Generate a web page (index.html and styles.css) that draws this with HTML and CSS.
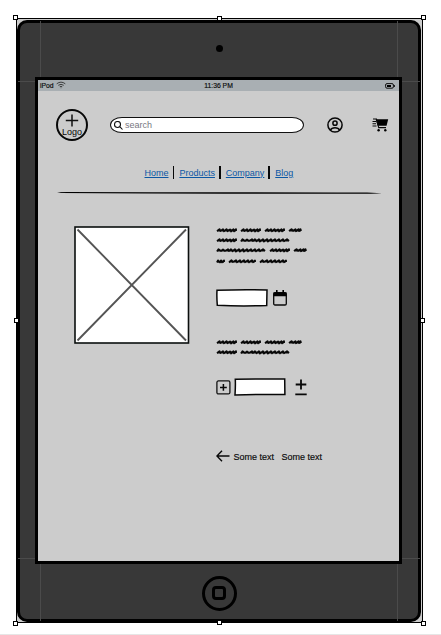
FILE: index.html
```html
<!DOCTYPE html>
<html lang="en">
<head>
<meta charset="utf-8">
<title>Product wireframe</title>
<link rel="stylesheet" href="styles.css">
</head>
<body>
<svg class="defs" aria-hidden="true">
  <symbol id="w5" viewBox="0 0 21 6"><path d="M1 4.2 3.500 2.200 4.500 4 7 2.300 8 4.200 10.500 2.200 11.500 4.200 14 2.400 15 4.400 17.500 2.300 18 4.300 20 2.200V4M1 3.600H20M10 3.300H19"/></symbol>
  <symbol id="w3" viewBox="0 0 14 6"><path d="M1 4 3.500 2.200 5 3.900 7.500 2.200 8 4.200 10.500 2.200 11 4.100 12.500 2.200 13 4M1 3.600H13"/></symbol>
  <symbol id="w12" viewBox="0 0 50 6"><path d="M1 4.600 2.500 2.300 5 4 7 2.500 9 4 12 2.300 13 4 15 2.300 16.500 4.300 19 2.300 20 4.500 23 2.300 24 4.500 27 2.200 28 4.500 31 2.300 32 4.300 35 2.200 36 4.200 39 2.300 40 4.300 43 2.200 44 4.200 47 2.200 49 4M1 3.600H49M14 3.400H34"/></symbol>
  <symbol id="w2" viewBox="0 0 9 6"><path d="M1 4.500 2 2.400 4 4.400 5 2.400 6 4.300 8 2.400V4M1 3.700H8"/></symbol>
  <symbol id="w7" viewBox="0 0 28 6"><path d="M1 4.400 3.500 2.300 5 4 8 2.300 9 4.200 12 2.300 13 4.300 16 2.200 17 4.200 20 2.300 21 4.300 24 2.200 25 4.200 27 2.500V4M1 3.600H27"/></symbol>
</svg>
<main class="artboard">
  <div class="tablet">
    <i class="guide left"></i><i class="guide right"></i><i class="guide top"></i><i class="guide bottom"></i>
    <div class="bezel"><span class="camera"></span></div>
    <section class="screen">
      <div class="status">
        <span class="carrier">iPod
          <svg width="10" height="8" viewBox="0 0 10 8"><path d="M.7 2.8Q5-.5 9.3 2.8M2.3 4.3Q5 2.3 7.7 4.3M3.8 5.7Q5 4.9 6.2 5.7M5 6.5v.7" fill="none" stroke="#222" stroke-width=".8"/></svg>
        </span>
        <span>11:36 PM</span>
        <svg class="battery" width="10" height="6" viewBox="0 0 10 6"><rect x=".6" y=".6" width="7.8" height="4.6" rx="1.4" fill="none" stroke="#111"/><path d="M2 2h4v2H2zM8.8 2h1v2h-1z"/></svg>
      </div>
      <header class="header">
        <div class="logo">
          <svg width="14" height="13" viewBox="0 0 14 13"><path d="M7 .5v12M.8 6.5h12.4" fill="none" stroke="#111" stroke-width="1.5"/></svg>
          <span>Logo</span>
        </div>
        <div class="search">
          <svg width="9" height="9" viewBox="0 0 9 9"><path d="M6 5.8 8.5 8.5M6.5 3.5a3 3 0 1 1-6 0 3 3 0 0 1 6 0Z" fill="none" stroke="#111" stroke-width="1.1"/></svg>
          <span>search</span>
        </div>
        <svg class="user" width="16" height="16" viewBox="0 0 16 16"><g fill="none" stroke="#080808" stroke-width="1.5"><circle cx="8" cy="8" r="7.1"/><circle cx="8" cy="6.2" r="2.1"/><path d="M3.4 13.1C4.2 11.5 6 10.8 8 10.8s3.8.7 4.6 2.3"/></g></svg>
        <svg class="cart" width="17" height="14" viewBox="0 0 17 14"><path d="M3.6 1.2H16.2L14.6 7.8H5.6z"/><path d="M1 1h3.5L6.7 9.6H14M.5 3.5H4M.5 5.8H4M.5 8H4.5" fill="none" stroke="#080808" stroke-width="1.1"/><circle cx="6.6" cy="12.3" r="1.2"/><circle cx="13.3" cy="12.3" r="1.2"/></svg>
      </header>
      <nav class="nav"><a>Home</a><a>Products</a><a>Company</a><a>Blog</a></nav>
      <svg class="rule" width="326" height="4" viewBox="0 0 326 4"><path d="M0 1.3 10 1Q120 1.2 310 1.6L325 2.3Q315 2.9 290 2.8Q100 2.7 4 2z"/></svg>
      <div class="product">
        <svg class="photo" width="116" height="118" viewBox="0 0 116 118"><rect x="1" y="1" width="113.5" height="116" fill="#fff" stroke="#0b0f0e" stroke-width="1.6"/><path d="M3.5 3.5 112 114.5M112 3.5 3.5 114.5" stroke="#555" stroke-width="1.9"/></svg>
        <div class="details">
          <div class="scribble">
            <p><svg class="w5"><use href="#w5"/></svg><svg class="w5"><use href="#w5"/></svg><svg class="w5"><use href="#w5"/></svg><svg class="w3"><use href="#w3"/></svg></p>
            <p><svg class="w5"><use href="#w5"/></svg><svg class="w12"><use href="#w12"/></svg></p>
            <p><svg class="w12"><use href="#w12"/></svg><svg class="w5"><use href="#w5"/></svg><svg class="w3"><use href="#w3"/></svg></p>
            <p><svg class="w2"><use href="#w2"/></svg><svg class="w7"><use href="#w7"/></svg><svg class="w7"><use href="#w7"/></svg></p>
          </div>
          <div class="date">
            <svg width="52" height="18" viewBox="0 0 52 18"><path d="M1 1.2Q25 .6 51 1L50.7 16.5Q25 17.4 1.3 16.3Q.6 8 1 1.2Z" fill="#fff" stroke="#080808" stroke-width="1.5"/></svg>
            <svg width="14" height="16" viewBox="0 0 14 16"><rect x=".7" y="2.7" width="12.6" height="12.3" rx="1.3" fill="none" stroke="#080808" stroke-width="1.3"/><path d="M.5 2.5h13v3.7H.5zM3 0h1.600v3H3zM9.400 0H11v3H9.400z"/></svg>
          </div>
          <div class="scribble">
            <p><svg class="w5"><use href="#w5"/></svg><svg class="w5"><use href="#w5"/></svg><svg class="w5"><use href="#w5"/></svg><svg class="w3"><use href="#w3"/></svg></p>
            <p><svg class="w5"><use href="#w5"/></svg><svg class="w12"><use href="#w12"/></svg></p>
          </div>
          <div class="quantity">
            <svg width="15" height="15" viewBox="0 0 15 15"><rect x=".9" y=".9" width="13" height="13" rx="1.5" fill="none" stroke="#111" stroke-width="1.3"/><path d="M7.4 4v6.8M4 7.4h6.8" stroke="#080808" stroke-width="1.5"/></svg>
            <svg width="52" height="18" viewBox="0 0 52 18"><path d="M1.3 1.2Q25 .7 50.7 1L50.9 16.4Q25 16.3 1 17Q1.6 8 1.3 1.2Z" fill="#fff" stroke="#080808" stroke-width="1.5"/></svg>
            <svg class="plusminus" width="12" height="17" viewBox="0 0 12 17"><path d="M6 .5v10M.7 5.5h10.6M.3 15.3h11.4" stroke="#080808" stroke-width="1.8"/></svg>
          </div>
          <div class="links">
            <svg width="14" height="12" viewBox="0 0 14 12"><path d="M6 .8.9 6 6 11.2M1 6h12.5" fill="none" stroke="#080808" stroke-width="1.4"/></svg>
            <span>Some text</span><span>Some text</span>
          </div>
        </div>
      </div>
    </section>
    <div class="bezel"><span class="home"><i></i></span></div>
  </div>
  <i class="handle nw"></i><i class="handle n"></i><i class="handle ne"></i><i class="handle w"></i><i class="handle e"></i><i class="handle sw"></i><i class="handle s"></i><i class="handle se"></i>
</main>
</body>
</html>
```

FILE: styles.css
```css
* { box-sizing: border-box; }
body {
  margin: 0;
  height: 635px;
  padding: 18px 0 0 16px;
  background: #fff;
  border-bottom: 1px solid #e6e6e6;
  font: 9px/12px "Liberation Sans", sans-serif;
  color: #080808;
  overflow: hidden;
}
svg { display: block; flex: none; }
p { margin: 0; }
.defs { position: absolute; width: 0; height: 0; }
.artboard {
  position: relative;
  width: 407px;
  height: 605px;
  padding-top: 1px;
  border: 1px solid #000;
  background: #ccc;
}
.tablet {
  position: relative;
  display: flex;
  flex-direction: column;
  width: 404px;
  height: 601.5px;
  border: 3px solid #000;
  border-radius: 10px;
  background: #383838;
}
.guide { position: absolute; background: #4b4b4b; }
.left, .right { width: 1px; top: -2px; bottom: -2px; }
.left { left: 20px; }
.right { right: 20px; }
.top, .bottom { height: 1px; left: -2px; right: -2px; }
.top { top: 58px; }
.bottom { bottom: 59.5px; }
.bezel { display: flex; justify-content: center; height: 54px; }
.camera { width: 7px; height: 7px; margin-top: 22px; border-radius: 50%; background: #000; }
.home {
  display: grid;
  place-items: center;
  width: 35px;
  height: 35px;
  margin-top: 11.5px;
  border: 3px solid #000;
  border-radius: 50%;
}
.home i { width: 14px; height: 14px; border: 3px solid #000; border-radius: 4px; }
.screen {
  position: relative;
  flex: none;
  width: 367px;
  height: 487px;
  margin-left: 15px;
  border: 3px solid #000;
  background: #ccc;
}
.status {
  display: grid;
  grid-template-columns: 1fr auto 1fr;
  align-items: center;
  height: 11px;
  padding: 0 4px 0 2px;
  background: #a9afb3;
  font-size: 6.8px;
  line-height: 10px;
  -webkit-text-stroke: .15px #080808;
}
.carrier { display: flex; gap: 2px; }
.status > span + span { margin-left: 2px; }
.battery { justify-self: end; }
.header { display: flex; align-items: center; height: 32px; margin: 18px 0 0 18px; }
.logo {
  display: flex;
  flex-direction: column;
  align-items: center;
  width: 32px;
  height: 32px;
  padding-top: 3px;
  border: 2px solid #080808;
  border-radius: 50%;
  line-height: 9px;
}
.logo span { margin-top: 1px; }
.search {
  display: flex;
  align-items: center;
  gap: 2px;
  width: 194px;
  height: 16px;
  margin-left: 22px;
  padding-left: 3px;
  border: 1px solid #111;
  border-radius: 12px / 8px;
  background: #fff;
  color: #777782;
}
.user { margin-left: 23px; }
.cart { margin-left: 28.5px; }
.nav { display: flex; margin: 25px 0 0 106.5px; }
.nav a {
  display: flex;
  align-items: center;
  height: 13px;
  color: #0b57a4;
  text-decoration: underline;
}
.nav a + a::before { content: ""; width: 1.6px; height: 13px; margin: 0 5.3px 0 4px; background: #080808; }
.rule { margin: 12px 0 0 18.5px; }
.product { display: flex; align-items: flex-start; margin: 31px 0 0 35.5px; }
.details { margin-left: 26.5px; }
.scribble { margin-top: .5px; }
.scribble p { display: flex; gap: 3px; height: 10.4px; }
.scribble svg { height: 6px; fill: none; stroke: #080808; stroke-width: 1.9; stroke-linejoin: round; }
.w5 { width: 21px; }
.w3 { width: 14px; }
.w12 { width: 50px; }
.w2 { width: 9px; }
.w7 { width: 28px; }
.date { display: flex; align-items: center; gap: 5px; height: 18px; margin: 21px 0 31.5px; }
.quantity { display: flex; align-items: center; height: 18px; margin-top: 19px; gap: 3px; }
.plusminus { margin-left: 6px; }
.links { display: flex; align-items: center; margin-top: 55px; gap: 3.5px; -webkit-text-stroke: .15px; }
.links svg { margin-top: -3px; }
.links span + span { margin-left: 4px; }
.handle { position: absolute; width: 5px; height: 5px; border: 1px solid #000; background: #fff; }
.nw, .sw { left: -4px; }
.w { left: -3px; }
.n, .s { left: 200px; }
.ne, .se { right: -4px; }
.e { right: -3px; }
.nw, .ne { top: -4px; }
.n { top: -3px; }
.w, .e { top: 299px; }
.sw, .se { bottom: -4px; }
.s { bottom: -3px; }
```
